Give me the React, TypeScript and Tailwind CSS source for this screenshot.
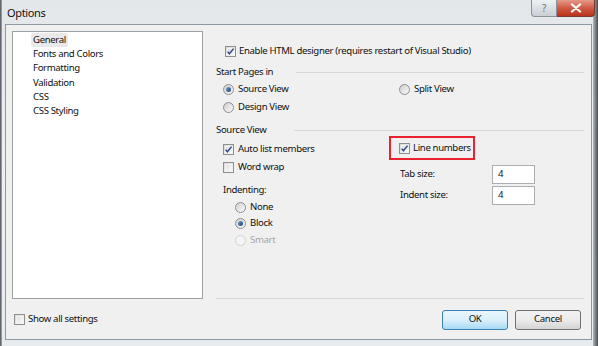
import React from "react";

const font = { fontFamily: '"Noto Sans", "Open Sans", sans-serif', letterSpacing: "-0.35px" };

function Check({ checked }: { checked?: boolean }) {
  return (
    <span className="relative inline-block w-[11px] h-[11px] border border-[#8f8f8f] bg-gradient-to-br from-[#d6d6d6] to-[#fafafa] shrink-0">
      <span className="absolute inset-[1px] border border-[#f4f4f4] bg-gradient-to-br from-[#dedede] to-[#f7f7f7]" />
      {checked && (
        <svg viewBox="0 0 11 11" className="absolute left-[-1px] top-[-1px] w-[11px] h-[11px]">
          <path d="M2.6 5.6 L4.4 7.8 L8.6 2.6" fill="none" stroke="#2f4a86" strokeWidth="1.5" />
        </svg>
      )}
    </span>
  );
}

function Radio({ checked, disabled }: { checked?: boolean; disabled?: boolean }) {
  return (
    <span
      className={
        "relative inline-block w-[11px] h-[11px] rounded-full border shrink-0 " +
        (disabled
          ? "border-[#d0d0d0] bg-[#f4f4f4]"
          : "border-[#8f8f8f] bg-gradient-to-br from-[#cfcfcf] to-[#fbfbfb]")
      }
    >
      {checked && (
        <span className="absolute left-[2px] top-[2px] w-[5px] h-[5px] rounded-full bg-gradient-to-br from-[#6fa4d4] to-[#1c3e78]" />
      )}
    </span>
  );
}

export default function App() {
  const treeItems = ["General", "Fonts and Colors", "Formatting", "Validation", "CSS", "CSS Styling"];
  return (
    <div
      className="w-[598px] h-[346px] overflow-hidden bg-gradient-to-b from-[#e4e7ea] via-[#eef0f2] to-[#e9ecef] text-[9.6px] text-[#111111] flex whitespace-nowrap"
      style={font}
    >
      <div className="w-[2px] h-full bg-gradient-to-r from-[#4f545b] to-[#a7acb2]" />
      <div className="flex-1 flex flex-col">
        {/* title bar */}
        <div className="h-[24px] flex items-start">
          <div className="pl-[5px] pt-[5px] text-[11px] text-[#111]">Options</div>
          <div className="flex-1" />
          <div className="flex translate-x-[2px]">
            <div className="w-[26px] h-[17px] rounded-bl-[4px] border border-t-0 border-[#8a9099] bg-gradient-to-b from-[#eef1f4] to-[#c9cfd6] flex items-center justify-center text-[10px] text-[#6b7078] leading-none">
              ?
            </div>
            <div className="w-[38px] h-[17px] rounded-br-[4px] border border-t-0 border-l-0 border-[#7a3a30] bg-gradient-to-b from-[#e39a88] via-[#cf5a42] to-[#b8321c] flex items-center justify-center">
              <svg viewBox="0 0 12 10" className="w-[12px] h-[10px]">
                <path d="M2 1.5 L10 8.5 M10 1.5 L2 8.5" stroke="#fff" strokeWidth="2.3" strokeLinecap="round" />
              </svg>
            </div>
          </div>
        </div>
        {/* client */}
        <div className="ml-[3px] mr-[1px] h-[316px] border border-[#8d98a3] bg-[#f0f0f0] flex flex-col">
          <div className="flex pt-[6px]">
            {/* tree */}
            <div className="ml-[6px] w-[191px] h-[268px] border border-[#9ba0a6] bg-white pt-[1px] pl-[18px]">
              {treeItems.map((t, i) => (
                <div key={t} className="h-[14.2px] flex items-center">
                  <span className={"px-[2px] leading-[14px] " + (i === 0 ? "bg-[#e9e9e9] rounded-[2px]" : "")}>{t}</span>
                </div>
              ))}
            </div>
            {/* right pane */}
            <div className="ml-[13px] w-[368px] h-[268px] flex flex-col border-b border-[#d5d9dd]">
              <div className="mt-[13px] h-[14px] flex items-center gap-[3px] pl-[9px]">
                <Check checked />
                <span>Enable HTML designer (requires restart of Visual Studio)</span>
              </div>
              <div className="mt-[7px] h-[14px] flex items-center">
                <span>Start Pages in</span>
                <div className="flex-1 ml-[23px] border-t border-[#d5d9dd]" />
              </div>
              <div className="mt-[3px] flex pl-[7px]">
                <div className="w-[176px] flex flex-col gap-[4px]">
                  <div className="h-[14px] flex items-center gap-[4px]">
                    <Radio checked />
                    <span>Source View</span>
                  </div>
                  <div className="h-[14px] flex items-center gap-[4px]">
                    <Radio />
                    <span>Design View</span>
                  </div>
                </div>
                <div className="h-[14px] flex items-center gap-[4px]">
                  <Radio />
                  <span>Split View</span>
                </div>
              </div>
              <div className="mt-[9px] h-[14px] flex items-center">
                <span>Source View</span>
                <div className="flex-1 ml-[28px] border-t border-[#d5d9dd]" />
              </div>
              <div className="flex pl-[7px]">
                <div className="w-[166px] flex flex-col">
                  <div className="mt-[5px] h-[14px] flex items-center gap-[4px]">
                    <Check checked />
                    <span>Auto list members</span>
                  </div>
                  <div className="mt-[4px] h-[14px] flex items-center gap-[4px]">
                    <Check />
                    <span>Word wrap</span>
                  </div>
                  <div className="mt-[9px] h-[14px] flex items-center">
                    <span>Indenting:</span>
                  </div>
                  <div className="pl-[12px] flex flex-col">
                    <div className="mt-[3px] h-[14px] flex items-center gap-[4px]">
                      <Radio />
                      <span>None</span>
                    </div>
                    <div className="mt-[2px] h-[14px] flex items-center gap-[4px]">
                      <Radio checked />
                      <span>Block</span>
                    </div>
                    <div className="mt-[3px] h-[14px] flex items-center gap-[4px] text-[#a6a6a6]">
                      <Radio disabled />
                      <span>Smart</span>
                    </div>
                  </div>
                </div>
                <div className="flex flex-col">
                  <div className="w-[86px] h-[24px] -mt-[1px] bg-[#e8222e] p-[2px] flex">
                    <div className="flex-1 bg-[#f0f0f0] flex items-center pl-[8px] gap-[3px]">
                      <Check checked />
                      <span>Line numbers</span>
                    </div>
                  </div>
                  <div className="pl-[11px] mt-[5px] flex flex-col gap-[2px]">
                    <div className="flex items-center h-[19px]">
                      <span className="w-[92px]">Tab size:</span>
                      <div className="w-[43px] h-[19px] border border-[#abadb3] bg-white pl-[5px] flex items-center">4</div>
                    </div>
                    <div className="flex items-center h-[19px]">
                      <span className="w-[92px]">Indent size:</span>
                      <div className="w-[43px] h-[19px] border border-[#abadb3] bg-white pl-[5px] flex items-center">4</div>
                    </div>
                  </div>
                </div>
              </div>
            </div>
          </div>
          {/* bottom row */}
          <div className="flex-1 flex items-center pl-[8px] pr-[10px] pt-[1px]">
            <div className="flex items-center gap-[3px]">
              <Check />
              <span>Show all settings</span>
            </div>
            <div className="flex-1" />
            <div className="flex gap-[7px]">
              <div className="w-[66px] h-[20px] rounded-[3px] border border-[#3c7fb1] bg-gradient-to-b from-[#eaf6fd] via-[#d9f0fc] to-[#a7d9f5] flex items-center justify-center">
                OK
              </div>
              <div className="w-[66px] h-[20px] rounded-[3px] border border-[#707070] bg-gradient-to-b from-[#f2f2f2] via-[#ebebeb] to-[#d4d4d4] flex items-center justify-center">
                Cancel
              </div>
            </div>
          </div>
        </div>
      </div>
      <div className="w-[5px] h-full bg-gradient-to-r from-[#b4b9bf] to-[#4a4f56]" />
    </div>
  );
}
